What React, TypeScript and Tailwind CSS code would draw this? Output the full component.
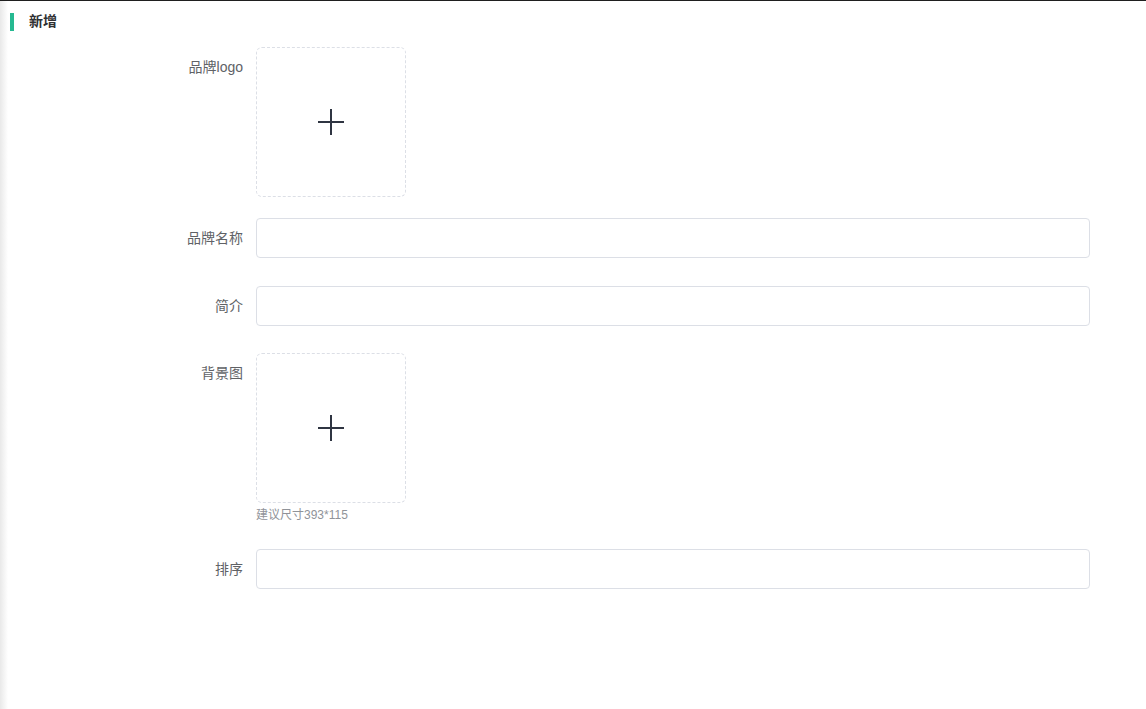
const FONT = '[font-family:"Liberation_Sans","Noto_Sans_CJK_SC",sans-serif]';

function Label({ text }: { text: string }) {
  return (
    <div className="w-[256px] shrink-0 pr-[13px] text-right text-[14px] leading-[40px] text-[#606266]">
      {text}
    </div>
  );
}

function PlusIcon() {
  return (
    <svg width="28" height="28" viewBox="0 0 28 28" className="text-[#2f3542]">
      <path d="M14 1v26M1 14h26" stroke="currentColor" strokeWidth="2" fill="none" />
    </svg>
  );
}

function Uploader() {
  return (
    <div className="flex h-[150px] w-[150px] items-center justify-center rounded-[6px] border border-dashed border-[#dcdfe6] bg-white">
      <PlusIcon />
    </div>
  );
}

function TextInput() {
  return (
    <input
      type="text"
      className="h-[40px] w-[834px] rounded-[4px] border border-[#dcdfe6] bg-white px-[15px] text-[14px] text-[#606266] outline-none"
    />
  );
}

export default function App() {
  return (
    <div className={`${FONT} flex h-[709px] w-full border-t border-[#1f1f1f] bg-white`}>
      <div className="w-[8px] shrink-0 bg-gradient-to-r from-[#e9e9e9] to-white" />
      <div className="flex-1">
        <div className="ml-[2px] mt-[10px] flex items-center">
          <span className="h-[18px] w-[4px] bg-[#26b991]" />
          <span className="ml-[15px] text-[14px] font-bold text-[#303133]">新增</span>
        </div>

        <div className="-ml-[8px] mt-[15px] flex flex-col">
          <div className="flex">
            <Label text="品牌logo" />
            <Uploader />
          </div>

          <div className="mt-[21px] flex">
            <Label text="品牌名称" />
            <TextInput />
          </div>

          <div className="mt-[28px] flex">
            <Label text="简介" />
            <TextInput />
          </div>

          <div className="mt-[27px] flex">
            <Label text="背景图" />
            <div className="flex flex-col">
              <Uploader />
              <span className="text-[12px] leading-[24px] text-[#909399]">建议尺寸393*115</span>
            </div>
          </div>

          <div className="mt-[22px] flex">
            <Label text="排序" />
            <TextInput />
          </div>
        </div>
      </div>
    </div>
  );
}
